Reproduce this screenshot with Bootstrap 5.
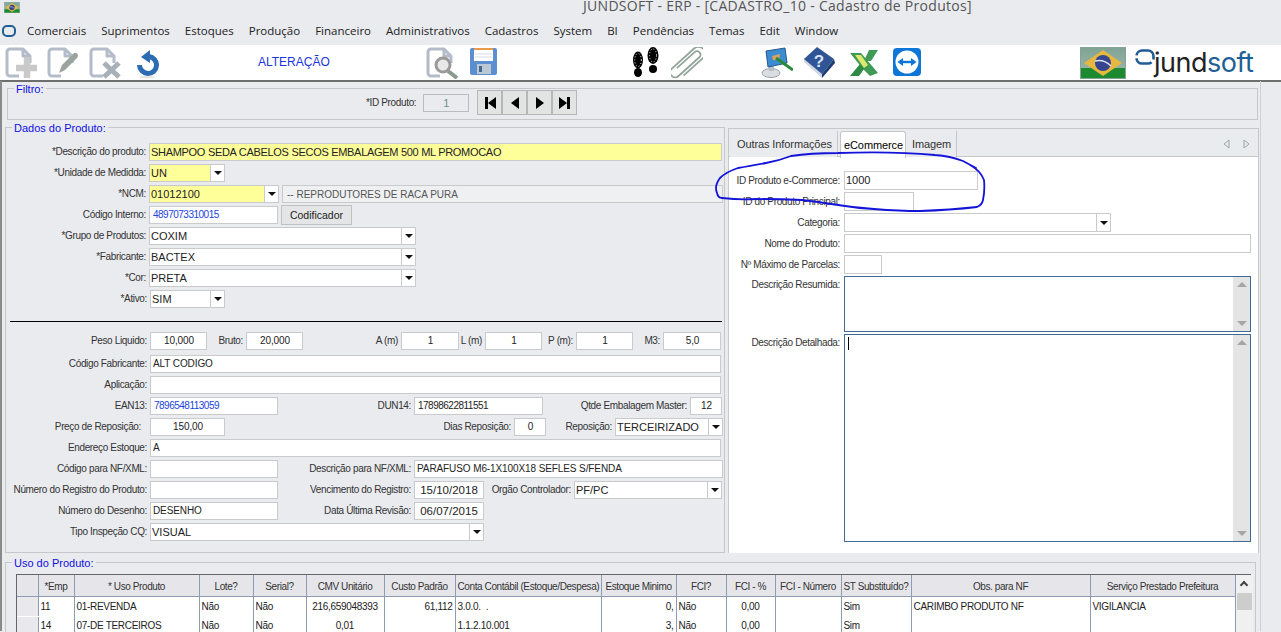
<!DOCTYPE html>
<html lang="pt-BR">
<head>
    <meta charset="UTF-8">
    <meta name="viewport" content="width=device-width, initial-scale=1">
    <title>JUNDSOFT - ERP</title>
    <link href="https://cdn.jsdelivr.net/npm/bootstrap@5.3.0/dist/css/bootstrap.min.css" rel="stylesheet">
    <style>
        html, body { height: 632px; overflow: hidden; background: #e9ebef; }
        body { font-family: "Liberation Sans", Arial, sans-serif; font-size: 10px; color: #333; }
        .app-root { position: relative; width: 1281px; height: 632px; overflow: hidden; }

        .win-title { height: 22px; padding-left: 4px; }
        .win-title svg { margin-top: 2px; }
        .win-title span { margin-left: 563px; font-family: "Open Sans", sans-serif; font-size: 14px; line-height: 12px; letter-spacing: .29px; color: #555; white-space: nowrap; }
        .win-menu { height: 23px; padding: 0 0 0 2px; flex-wrap: nowrap; justify-content: flex-start; align-items: flex-start; }
        .win-menu svg { margin-top: 3px; }
        .win-menu .navbar-nav { margin-left: 11px; gap: 15px; flex-direction: row; }
        .win-menu .navbar-nav .nav-link { padding: 0; font-family: "Open Sans", sans-serif; font-size: 11.5px; line-height: 17px; color: #222; }

        .tool-bar { height: 37px; padding: 2px 0 0 5px; background: #fff; border-bottom: 2px solid #6e6e6e; }
        .tool-bar svg { flex: none; display: block; }
        .mode-txt { width: 64px; margin: 8px 0 0 99px; font-size: 12px; line-height: 14px; color: #1a35e0; white-space: nowrap; }
        .g10 { margin-left: 10px; } .g11 { margin-left: 11px; } .g12 { margin-left: 12px; } .g14 { margin-left: 14px; }
        .g16 { margin-left: 16px; } .g58 { margin-left: 58px; } .g104 { margin-left: 104px; } .g134 { margin-left: 134px; } .g159 { margin-left: 159px; }
        .brand-box { position: relative; width: 122px; height: 32px; margin-left: 9px; }
        .brand-box svg { position: absolute; left: 0; top: 2px; }
        .brand-txt { position: absolute; left: 19px; top: 0; font-family: Inter, sans-serif; font-weight: 400; font-size: 27px; line-height: 32px; letter-spacing: -.5px; color: #222; white-space: nowrap; }
        .brand-txt b { font-weight: 400; color: #1f5f95; }

        .work-area { height: 550px; width: 1261px; padding: 0 0 0 3px; border-left: 2px solid #8a8a8a; border-right: 1px solid #cfd0d3; }
        .grp-box { margin: 0; padding: 0; border: 1px solid #c6c7c9; min-width: 0; }
        .grp-box legend { float: none; width: auto; margin: 0 0 0 6px; padding: 2px 2px 0; font-size: 11px; line-height: 12px; color: #1010e0; }
        .grp-filter { width: 1251px; height: 39px; margin: -1px 0 0 2px; }
        .filter-row { margin-top: -5px; padding-left: 358px; }
        .nav-btn { width: 25px; height: 25px; padding: 0; display: flex; align-items: center; justify-content: center; background: #e2e4e4; border: 1px solid #b5b7b8; border-radius: 0; }

        .mid-row { gap: 3px; }
        .grp-data { width: 720px; height: 433px; flex: none; }
        .form-top { margin-top: 9px; }
        .form-rows { display: flex; flex-direction: column; gap: 3px; }
        .frm-line { display: flex; align-items: center; height: 18px; }
        .frm-gap { margin-top: 2px; }
        .sep-line { height: 1px; margin: 13px 2px 10px 4px; background: #000; }
        .lbl { flex: none; padding-right: 3px; text-align: right; white-space: nowrap; letter-spacing: -.35px; line-height: 12px; }
        .lbl.lbl-in { padding-right: 9px; }
        .lbl.lbl-top { margin-top: 3px; }
        .fld.form-control { flex: none; height: 100%; min-height: 0; padding: 0 1px; border: 1px solid #c9cacc; border-radius: 0; background: #fff; color: #222; font-size: 11px; line-height: 16px; white-space: nowrap; overflow: hidden; }
        .fld.small-txt { padding-left: 2px; font-size: 10px; letter-spacing: -.1px; }
        .fld.blue-txt { padding-left: 3px; color: #2244dd; letter-spacing: -.5px; }
        .fld.tight-txt { padding-left: 3px; letter-spacing: -.5px; }
        .fld.cen-txt { text-align: center; }
        .fld.date-txt { font-size: 11.5px; }
        .fld.yel { background: #ffff99; }
        .fld.desc-txt { letter-spacing: -.3px; }
        .fld.ro-txt { background: #eef0f2; color: #555; padding-left: 4px; letter-spacing: 0; line-height: 17px; }
        .fld.id-box { background: #e9ebef; color: #6f8f80; text-align: center; font-size: 11px; width: 46px; border-color: #bbb; }
        .cmb { flex: none; display: flex; height: 100%; border: 1px solid #c9cacc; background: #fff; }
        .cmb-val { flex: 1 1 auto; padding: 0 1px; font-size: 11px; line-height: 16px; color: #222; white-space: nowrap; overflow: hidden; }
        .cmb-arr { flex: none; width: 14px; display: flex; align-items: center; justify-content: center; border-left: 1px solid #c9cacc; }
        .cmb-arr::after { content: ""; border-style: solid; border-width: 4px 4px 0; border-color: #111 transparent transparent; }
        .cmb.yel .cmb-val { background: #ffff99; }
        .code-btn.btn { flex: none; width: 71px; height: 20px; margin-left: 3px; padding: 0; background: #e4e5e6; border: 1px solid #c0c1c2; border-radius: 0; font-size: 10.5px; line-height: 17px; color: #222; }

        .s32 { width: 32px; } .s57 { width: 57px; } .s58 { width: 58px; } .s70 { width: 70px; } .s71 { width: 71px; } .s75 { width: 75px; } .s76 { width: 76px; }
        .s108 { width: 108px; } .s128 { width: 128px; } .s129 { width: 129px; } .s130 { width: 130px; } .s134 { width: 134px; } .s148 { width: 148px; } .s267 { width: 267px; }
        .s309 { width: 309px; } .s334 { width: 334px; } .s38 { width: 38px; } .s407 { width: 407px; } .s441 { width: 441px; } .s571 { width: 571px; } .s573 { width: 573px; }
        .l26 { width: 26px; } .l30 { width: 30px; } .l34 { width: 34px; } .l39 { width: 39px; } .l69 { width: 69px; } .l90 { width: 90px; } .l98 { width: 98px; }
        .l115 { width: 115px; } .l136 { width: 136px; } .l143 { width: 143px; } .l144 { width: 144px; } .l147 { width: 147px; } .l289 { width: 289px; } .m2 { margin-left: 3px; }

        .tab-pane-box { width: 531px; height: 425px; margin-top: 8px; border: 1px solid #c6c7c9; border-bottom: 0; background: #fff; }
        .tab-strip { position: relative; height: 28px; padding: 2px 0 0 1px; background: #e9ebef; border-bottom: 1px solid #c6c7c9; }
        .tab-strip .nav-tabs { border: 0; flex-wrap: nowrap; }
        .tab-strip .nav-link { height: 26px; padding: 6px 6px 0 7px; font-size: 11px; line-height: 14px; letter-spacing: -.1px; color: #333; background: #e9ebef; border: 0; border-right: 1px solid #c6c7c9; border-radius: 0; white-space: nowrap; }
        .tab-strip .nav-link.tab-a { width: 108px; }
        .tab-strip .nav-link.active { width: 66px; height: 27px; margin-left: 2px; padding-left: 3px; background: #fff; border: 1px solid #c6c7c9; border-bottom: 0; border-radius: 3px 3px 0 0; }
        .tab-strip .nav-link.tab-c { width: 51px; padding-left: 6px; }
        .tab-arrows { position: absolute; right: 8px; top: 10px; gap: 13px; }
        .tab-body { padding: 14px 0 0 0; }
        .tab-body .frm-line { height: 19px; }
        .tab-body .lbl { padding-right: 4px; }
        .tab-rows { gap: 2px; }
        .txt-area { display: flex; flex: none; width: 407px; border: 1px solid #3f6a96; background: #fff; }
        .txt-in { flex: 1 1 auto; padding: 2px; }
        .caret-bar { display: block; width: 1px; height: 13px; background: #000; margin-left: 1px; }
        .v-scroll { flex: none; width: 17px; display: flex; flex-direction: column; justify-content: space-between; align-items: center; padding: 5px 0; background: #e4e4e4; }
        .ar-up, .ar-dn { width: 0; height: 0; border-style: solid; border-color: transparent; }
        .ar-up { border-width: 0 5px 5px; border-bottom-color: #a6a6a6; }
        .ar-dn { border-width: 5px 5px 0; border-top-color: #a6a6a6; }
        .h-res { height: 56px; } .h-det { height: 208px; }

        .grp-use { width: 1251px; height: 90px; margin-top: 2px; padding: 0 6px 0 10px; }
        .grp-use legend { margin-left: -4px; }
        .grid-wrap { display: flex; width: 1235px; margin-top: 5px; border-left: 1px solid #666; border-top: 1px solid #666; background: #fff; }
        .data-grid.table { width: 1218px; margin: 0; table-layout: fixed; font-size: 10px; --bs-table-bg: transparent; color: #222; }
        .data-grid.table th, .data-grid.table td { height: 20px; padding: 0 2px; border: 0; border-right: 1px solid #8d9cb2; line-height: 19px; white-space: nowrap; overflow: hidden; letter-spacing: -.3px; }
        .data-grid.table th { height: 21px; background: #e6e6ea; border-bottom: 1px solid #8d9cb2; font-weight: 400; text-align: center; color: #333; letter-spacing: -.4px; }
        .data-grid.table td.row-h { background: #e9e9ed; border-bottom: 1px solid #fff; }
        .grid-scroll { flex: none; width: 17px; display: flex; flex-direction: column; align-items: center; background: #f0f0f0; padding-top: 7px; }
        .grid-scroll i { display: block; width: 6px; height: 6px; border: solid #444; border-width: 2px 0 0 2px; transform: rotate(45deg); }
        .grid-scroll em { display: block; width: 15px; height: 17px; margin-top: 5px; background: #cdcdcd; }
        .pen-mark { position: absolute; left: 0; top: 0; pointer-events: none; }
    </style>
</head>
<body>
<svg width="0" height="0" class="d-block">
    <defs>
        <linearGradient id="flagSky" x1="0" y1="0" x2="0" y2="1"><stop offset="0" stop-color="#7fa394"/><stop offset="1" stop-color="#a4b9ae"/></linearGradient>
        <symbol id="brFlag" viewBox="0 0 46 32">
            <rect x=".5" y=".5" width="45" height="31" fill="url(#flagSky)" stroke="#84a596"/>
            <rect x="1" y="21" width="44" height="10" fill="#1d8a32"/>
            <polygon points="4,16 23,3 42,16 23,29" fill="#e6b83f"/>
            <circle cx="23" cy="16" r="8" fill="#35458f"/>
            <path d="M15 14 Q24 12 31 19" fill="none" stroke="#dfe4ee" stroke-width="1.5"/>
        </symbol>
        <symbol id="docOut" viewBox="0 0 32 32">
            <path d="M14 29 H5 a3 3 0 0 1-3-3 V5 a3 3 0 0 1 3-3 H18 L25 9 V16 M18 2 V9 H25" fill="none" stroke="#b4bcc9" stroke-width="3" stroke-linejoin="round"/>
        </symbol>
    </defs>
</svg>
<div class="app-root">
    <div class="win-title d-flex align-items-start">
        <svg width="16" height="11"><use href="#brFlag"/></svg>
        <span>JUNDSOFT - ERP - [CADASTRO_10 - Cadastro de Produtos]</span>
    </div>

    <nav class="navbar navbar-expand win-menu">
        <svg width="14" height="12" viewBox="0 0 14 12"><rect x="1" y="1" width="12" height="10" rx="4" fill="none" stroke="#1f5f95" stroke-width="2"/></svg>
        <div class="navbar-nav">
            <a class="nav-link" href="#">Comerciais</a>
            <a class="nav-link" href="#">Suprimentos</a>
            <a class="nav-link" href="#">Estoques</a>
            <a class="nav-link" href="#">Produção</a>
            <a class="nav-link" href="#">Financeiro</a>
            <a class="nav-link" href="#">Administrativos</a>
            <a class="nav-link" href="#">Cadastros</a>
            <a class="nav-link" href="#">System</a>
            <a class="nav-link" href="#">BI</a>
            <a class="nav-link" href="#">Pendências</a>
            <a class="nav-link" href="#">Temas</a>
            <a class="nav-link" href="#">Edit</a>
            <a class="nav-link" href="#">Window</a>
        </div>
    </nav>

    <div class="tool-bar d-flex align-items-start">
        <!-- novo -->
        <svg width="32" height="32" viewBox="0 0 32 32"><use href="#docOut" width="32" height="32"/><path d="M22 10 V31 M11 21 H32" stroke="#c9c9c9" stroke-width="6.5"/></svg>
        <!-- editar -->
        <svg class="g10" width="32" height="32" viewBox="0 0 32 32"><use href="#docOut" width="32" height="32"/><path d="M12 26 l3-8 L27 6 q3-1 4 2 q0 2-1 3 L18 23z" fill="#9aa39d"/></svg>
        <!-- excluir -->
        <svg class="g10" width="32" height="32" viewBox="0 0 32 32"><use href="#docOut" width="32" height="32"/><path d="M15 16 L30 30 M30 16 L15 30" stroke="#a8b0b8" stroke-width="5"/></svg>
        <!-- desfazer -->
        <svg class="g16" width="22" height="32" viewBox="0 0 22 32"><ellipse cx="10" cy="30" rx="8" ry="1.5" fill="#e6e6e6"/><path d="M12 9.5 A8.5 8.5 0 1 1 2.5 18" fill="none" stroke="#2b6cb3" stroke-width="5"/><polygon points="4,10 13,3 13,16" fill="#2b6cb3"/></svg>
        <div class="mode-txt">ALTERAÇÃO</div>
        <!-- pesquisar -->
        <svg class="g104" width="32" height="32" viewBox="0 0 32 32"><use href="#docOut" width="32" height="32"/><path d="M22 24 L31 31" stroke="#8a9a90" stroke-width="4"/><circle cx="17" cy="18" r="7" fill="#e8e8e8" stroke="#9a9a9a" stroke-width="3"/></svg>
        <!-- salvar -->
        <svg class="g12" width="28" height="32" viewBox="0 0 28 32"><rect y="1" width="27" height="27" rx="2" fill="#5b8fd0"/><rect x="4" y="1" width="19" height="2" fill="#e89a4a"/><rect x="4" y="3" width="19" height="11" fill="#fff"/><path d="M5 7 H22 M5 10 H22" stroke="#d5dde6"/><rect x="7" y="17" width="14" height="10" fill="#bcc8d4"/><rect x="9" y="19" width="3" height="6" fill="#45698f"/></svg>
        <!-- pegadas -->
        <svg class="g134" width="28" height="32" viewBox="0 0 28 32">
            <ellipse cx="6" cy="13" rx="5" ry="8.5"/><ellipse cx="6" cy="25.5" rx="4" ry="4.5"/>
            <ellipse cx="21" cy="8.5" rx="5.5" ry="8.5"/><ellipse cx="21" cy="22" rx="4" ry="4"/>
            <ellipse cx="6" cy="13" rx="3.3" ry="6.5" fill="none" stroke="#fff" stroke-dasharray="1 2"/>
            <ellipse cx="21" cy="8.5" rx="3.5" ry="6.5" fill="none" stroke="#fff" stroke-dasharray="1 2"/>
        </svg>
        <!-- anexo -->
        <svg class="g11" width="32" height="32" viewBox="0 0 32 32"><g transform="rotate(48 16 16)"><path d="M13 27 V3 a3.5 3.5 0 0 1 7 0 V31 a5 5 0 0 1-10 0 V1 a6.5 6.5 0 0 1 13 0 V27" fill="none" stroke="#93a59b" stroke-width="1.8"/></g></svg>
        <!-- ferramenta -->
        <svg class="g58" width="32" height="32" viewBox="0 0 32 32"><ellipse cx="10" cy="26" rx="9" ry="4.5" fill="#d9dde2" stroke="#9ba3ab"/><rect x="8" y="18" width="5" height="6" fill="#b7bec6"/><polygon points="5,4 24,1 26,16 7,20" fill="#3d8bd0" stroke="#24598e"/><path d="M11 9 L19 7 L18 13 L12 13z" fill="#e0a060"/><path d="M15 11 L32 23" stroke="#2a8a3a" stroke-width="3"/></svg>
        <!-- ajuda -->
        <svg class="g10" width="32" height="32" viewBox="0 0 32 32"><polygon points="1,15 19,31 19,27 1,11" fill="#cfd6e6"/><polygon points="1,12 14,0 31,12 19,27" fill="#2f5596"/><polygon points="19,27 31,12 32,16 19,31" fill="#1f3c72"/><text x="16" y="20" text-anchor="middle" font-family="Liberation Sans" font-size="17" font-weight="700" fill="#d8e4f5">?</text></svg>
        <!-- excel -->
        <svg class="g14" width="30" height="32" viewBox="0 0 30 32"><polygon points="20,3 29,3 22,14 15,14" fill="#3f9a55"/><polygon points="1,6 12,6 29,26 21,29 14,22" fill="#3f9a55"/><polygon points="6,8 12,8 19,18 15,21" fill="#dbe96e"/><polygon points="1,29 11,17 15,22 10,29" fill="#2f8a45"/></svg>
        <!-- teamviewer -->
        <svg class="g14" width="28" height="32" viewBox="0 0 28 32"><rect y="1" width="28" height="28" rx="4" fill="#0e76d6"/><circle cx="14" cy="15" r="11.5" fill="#fff"/><path d="M9 15 H19" stroke="#0e76d6" stroke-width="2.4"/><polygon points="4.5,15 10,11 10,19" fill="#0e76d6"/><polygon points="23.5,15 18,11 18,19" fill="#0e76d6"/></svg>
        <svg class="g159" width="46" height="32"><use href="#brFlag"/></svg>
        <div class="brand-box">
            <svg width="20" height="18" viewBox="0 0 20 18"><rect x="1.5" y="1.5" width="17" height="13" rx="5.5" fill="none" stroke="#1f5d96" stroke-width="2.6" stroke-dasharray="18 3"/></svg>
            <span class="brand-txt">jund<b>soft</b></span>
        </div>
    </div>

    <main class="work-area">
        <fieldset class="grp-box grp-filter">
            <legend>Filtro:</legend>
            <div class="filter-row d-flex align-items-center">
                <div class="lbl">*ID Produto:</div>
                <div class="frm-line ms-1"><div class="form-control fld id-box">1</div></div>
                <div class="d-flex ms-2">
                    <button type="button" class="nav-btn btn"><svg width="14" height="14" viewBox="0 0 14 14"><path d="M2 1 H5 V13 H2z M13 1 V13 L5 7z"/></svg></button>
                    <button type="button" class="nav-btn btn"><svg width="14" height="14" viewBox="0 0 14 14"><path d="M11 1 V13 L3 7z"/></svg></button>
                    <button type="button" class="nav-btn btn"><svg width="14" height="14" viewBox="0 0 14 14"><path d="M3 1 V13 L11 7z"/></svg></button>
                    <button type="button" class="nav-btn btn"><svg width="14" height="14" viewBox="0 0 14 14"><path d="M1 1 V13 L9 7z M9 1 H12 V13 H9z"/></svg></button>
                </div>
            </div>
        </fieldset>

        <div class="d-flex mid-row">
            <fieldset class="grp-box grp-data">
                <legend>Dados do Produto:</legend>
                <div class="form-rows form-top">
                    <div class="frm-line"><div class="lbl l143">*Descrição do produto:</div><div class="form-control fld yel desc-txt s573">SHAMPOO SEDA CABELOS SECOS EMBALAGEM 500 ML PROMOCAO</div></div>
                    <div class="frm-line"><div class="lbl l143">*Unidade de Medidda:</div><div class="cmb yel s76"><div class="cmb-val">UN</div><div class="cmb-arr"></div></div></div>
                    <div class="frm-line"><div class="lbl l143">*NCM:</div><div class="cmb yel s130"><div class="cmb-val">01012100</div><div class="cmb-arr"></div></div><div class="form-control fld small-txt ro-txt s441 m2">-- REPRODUTORES DE RACA PURA</div></div>
                    <div class="frm-line"><div class="lbl l143">Código Interno:</div><div class="form-control fld small-txt blue-txt s129">4897073310015</div><button type="button" class="btn code-btn">Codificador</button></div>
                    <div class="frm-line"><div class="lbl l143">*Grupo de Produtos:</div><div class="cmb s267"><div class="cmb-val">COXIM</div><div class="cmb-arr"></div></div></div>
                    <div class="frm-line"><div class="lbl l143">*Fabricante:</div><div class="cmb s267"><div class="cmb-val">BACTEX</div><div class="cmb-arr"></div></div></div>
                    <div class="frm-line"><div class="lbl l143">*Cor:</div><div class="cmb s267"><div class="cmb-val">PRETA</div><div class="cmb-arr"></div></div></div>
                    <div class="frm-line"><div class="lbl l144">*Ativo:</div><div class="cmb s75"><div class="cmb-val">SIM</div><div class="cmb-arr"></div></div></div>
                </div>
                <div class="sep-line"></div>
                <div class="form-rows">
                    <div class="frm-line">
                        <div class="lbl l144">Peso Liquido:</div><div class="form-control fld small-txt cen-txt s57">10,000</div>
                        <div class="lbl l39">Bruto:</div><div class="form-control fld small-txt cen-txt s57">20,000</div>
                        <div class="lbl l98">A (m)</div><div class="form-control fld small-txt cen-txt s58">1</div>
                        <div class="lbl l26">L (m)</div><div class="form-control fld small-txt cen-txt s57">1</div>
                        <div class="lbl l34">P (m):</div><div class="form-control fld small-txt cen-txt s57">1</div>
                        <div class="lbl l30">M3:</div><div class="form-control fld small-txt cen-txt s58">5,0</div>
                    </div>
                    <div class="frm-line frm-gap"><div class="lbl l144">Código Fabricante:</div><div class="form-control fld small-txt s571">ALT CODIGO</div></div>
                    <div class="frm-line"><div class="lbl l144">Aplicação:</div><div class="form-control fld small-txt s571"></div></div>
                    <div class="frm-line">
                        <div class="lbl l144">EAN13:</div><div class="form-control fld small-txt blue-txt s128">7896548113059</div>
                        <div class="lbl l136">DUN14:</div><div class="form-control fld small-txt tight-txt s129">17898622811551</div>
                        <div class="lbl l147">Qtde Embalagem Master:</div><div class="form-control fld small-txt cen-txt s32">12</div>
                    </div>
                    <div class="frm-line">
                        <div class="lbl lbl-in l144">Preço de Reposição:</div><div class="form-control fld small-txt cen-txt s75">150,00</div>
                        <div class="lbl l289">Dias Reposição:</div><div class="form-control fld small-txt cen-txt s32">0</div>
                        <div class="lbl l69">Reposição:</div><div class="cmb s108"><div class="cmb-val">TERCEIRIZADO</div><div class="cmb-arr"></div></div>
                    </div>
                    <div class="frm-line"><div class="lbl l144">Endereço Estoque:</div><div class="form-control fld small-txt s571">A</div></div>
                    <div class="frm-line">
                        <div class="lbl l144">Código para NF/XML:</div><div class="form-control fld small-txt s128"></div>
                        <div class="lbl l136">Descrição para NF/XML:</div><div class="form-control fld small-txt s309">PARAFUSO M6-1X100X18 SEFLES S/FENDA</div>
                    </div>
                    <div class="frm-line">
                        <div class="lbl l144">Número do Registro do Produto:</div><div class="form-control fld small-txt s128"></div>
                        <div class="lbl l136">Vencimento do Registro:</div><div class="form-control fld date-txt cen-txt s70">15/10/2018</div>
                        <div class="lbl l90">Orgão Controlador:</div><div class="cmb s148"><div class="cmb-val">PF/PC</div><div class="cmb-arr"></div></div>
                    </div>
                    <div class="frm-line">
                        <div class="lbl l144">Número do Desenho:</div><div class="form-control fld small-txt s128">DESENHO</div>
                        <div class="lbl l136">Data Última Revisão:</div><div class="form-control fld date-txt cen-txt s70">06/07/2015</div>
                    </div>
                    <div class="frm-line"><div class="lbl l144">Tipo Inspeção CQ:</div><div class="cmb s334"><div class="cmb-val">VISUAL</div><div class="cmb-arr"></div></div></div>
                </div>
            </fieldset>

            <section class="tab-pane-box">
                <div class="tab-strip">
                    <ul class="nav nav-tabs">
                        <li class="nav-item"><a class="nav-link tab-a" href="#">Outras Informações</a></li>
                        <li class="nav-item"><a class="nav-link active" href="#">eCommerce</a></li>
                        <li class="nav-item"><a class="nav-link tab-c" href="#">Imagem</a></li>
                    </ul>
                    <div class="tab-arrows d-flex">
                        <svg width="7" height="10" viewBox="0 0 7 10"><path d="M6 1 V9 L1 5z" fill="none" stroke="#9aa9a0"/></svg>
                        <svg width="7" height="10" viewBox="0 0 7 10"><path d="M1 1 V9 L6 5z" fill="none" stroke="#9aa9a0"/></svg>
                    </div>
                </div>
                <div class="tab-body">
                    <div class="form-rows tab-rows">
                        <div class="frm-line"><div class="lbl l115">ID Produto e-Commerce:</div><div class="form-control fld s134">1000</div></div>
                        <div class="frm-line"><div class="lbl l115">ID do Produto Principal:</div><div class="form-control fld s70"></div></div>
                        <div class="frm-line"><div class="lbl l115">Categoria:</div><div class="cmb s267"><div class="cmb-val"></div><div class="cmb-arr"></div></div></div>
                        <div class="frm-line"><div class="lbl l115">Nome do Produto:</div><div class="form-control fld s407"></div></div>
                        <div class="frm-line"><div class="lbl l115">Nº Máximo de Parcelas:</div><div class="form-control fld s38"></div></div>
                        <div class="d-flex align-items-start"><div class="lbl lbl-top l115">Descrição Resumida:</div><div class="txt-area h-res"><div class="txt-in"></div><div class="v-scroll"><span class="ar-up"></span><span class="ar-dn"></span></div></div></div>
                        <div class="d-flex align-items-start"><div class="lbl lbl-top l115">Descrição Detalhada:</div><div class="txt-area h-det"><div class="txt-in"><span class="caret-bar"></span></div><div class="v-scroll"><span class="ar-up"></span><span class="ar-dn"></span></div></div></div>
                    </div>
                </div>
            </section>
        </div>

        <fieldset class="grp-box grp-use">
            <legend>Uso do Produto:</legend>
            <div class="grid-wrap">
                <table class="table data-grid">
                    <colgroup>
                        <col width="21"><col width="36"><col width="125"><col width="54"><col width="53"><col width="78"><col width="71"><col width="146"><col width="75"><col width="50"><col width="49"><col width="66"><col width="70"><col width="179"><col width="145">
                    </colgroup>
                    <thead>
                        <tr><th></th><th>*Emp</th><th>* Uso Produto</th><th>Lote?</th><th>Serial?</th><th>CMV Unitário</th><th>Custo Padrão</th><th>Conta Contábil (Estoque/Despesa)</th><th>Estoque Minimo</th><th>FCI?</th><th>FCI - %</th><th>FCI - Número</th><th>ST Substituído?</th><th>Obs. para NF</th><th>Serviço Prestado Prefeitura</th></tr>
                    </thead>
                    <tbody>
                        <tr><td class="row-h"></td><td>11</td><td>01-REVENDA</td><td>Não</td><td>Não</td><td class="text-center">216,659048393</td><td class="text-end">61,112</td><td>3.0.0.&nbsp;&nbsp;.</td><td class="text-end">0,</td><td>Não</td><td class="text-center">0,00</td><td></td><td>Sim</td><td>CARIMBO PRODUTO NF</td><td>VIGILANCIA</td></tr>
                        <tr><td class="row-h"></td><td>14</td><td>07-DE TERCEIROS</td><td>Não</td><td>Não</td><td class="text-center">0,01</td><td></td><td>1.1.2.10.001</td><td class="text-end">3,</td><td>Não</td><td class="text-center">0,00</td><td></td><td>Sim</td><td></td><td></td></tr>
                    </tbody>
                </table>
                <div class="grid-scroll"><i></i><em></em></div>
            </div>
        </fieldset>
    </main>

    <!-- marcação feita à mão por cima do print -->
    <svg class="pen-mark" width="1281" height="632" viewBox="0 0 1281 632">
        <path d="M976 168 L963 161 Q950 156 935 155 Q892 151 838 153 Q810 153 791 156 Q778 161 766 163 Q750 166 738 168 Q726 172 720 178 Q714 186 717 193 Q718 198 722 198 Q740 200 756 199 Q780 199 802 200 Q820 202 838 205 Q856 208 874 209 Q900 211 920 211 Q950 210 977 207 Q982 205 983 200 Q985 190 984 180 Q980 170 970 165" fill="none" stroke="#1414d8" stroke-width="1.8" stroke-linecap="round"/>
    </svg>
</div>
<script src="https://cdn.jsdelivr.net/npm/bootstrap@5.3.0/dist/js/bootstrap.bundle.min.js"></script>
</body>
</html>
